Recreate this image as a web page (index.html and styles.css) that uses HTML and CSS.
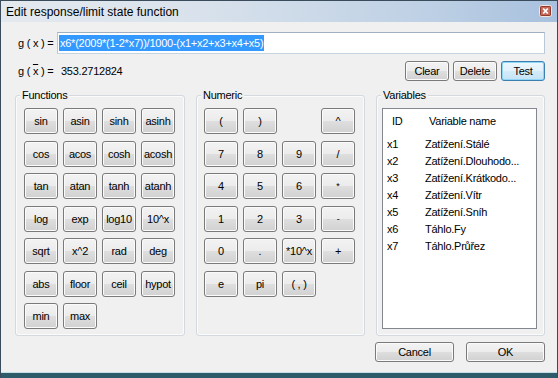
FILE: index.html
```html
<!DOCTYPE html>
<html lang="cs">
<head>
<meta charset="utf-8">
<title>Edit response/limit state function</title>
<link rel="stylesheet" href="styles.css">
</head>
<body>
<div class="window">
  <div class="titlebar">
    <span class="title">Edit response/limit state function</span>
    <svg class="close" width="13" height="12" viewBox="0 0 13 12" aria-label="Close">
      <rect x="0.5" y="0.5" width="12" height="11" rx="2" fill="#c9685a" stroke="#f4e4e0"/>
      <rect x="1.5" y="1.5" width="10" height="9" rx="1" fill="none" stroke="#8e3a2e"/>
      <path d="M4.2 3.5 L8.8 8.5 M8.8 3.5 L4.2 8.5" stroke="#fff" stroke-width="1.8"/>
    </svg>
  </div>
  <div class="content">
    <div class="row expr-row">
      <span class="glabel">g ( x ) =</span>
      <div class="textbox"><span class="sel">x6*(2009*(1-2*x7))/1000-(x1+x2+x3+x4+x5)</span></div>
    </div>
    <div class="row result-row">
      <span class="glabel">g ( <span class="bar">x</span> ) =</span>
      <span class="value">353.2712824</span>
      <div class="actions">
        <button class="btn">Clear</button>
        <button class="btn">Delete</button>
        <button class="btn default">Test</button>
      </div>
    </div>
    <div class="groups">
      <section class="group functions">
        <span class="group-title">Functions</span>
        <div class="keys">
          <button class="btn">sin</button><button class="btn">asin</button><button class="btn">sinh</button><button class="btn">asinh</button>
          <button class="btn">cos</button><button class="btn">acos</button><button class="btn">cosh</button><button class="btn">acosh</button>
          <button class="btn">tan</button><button class="btn">atan</button><button class="btn">tanh</button><button class="btn">atanh</button>
          <button class="btn">log</button><button class="btn">exp</button><button class="btn">log10</button><button class="btn">10^x</button>
          <button class="btn">sqrt</button><button class="btn">x^2</button><button class="btn">rad</button><button class="btn">deg</button>
          <button class="btn">abs</button><button class="btn">floor</button><button class="btn">ceil</button><button class="btn">hypot</button>
          <button class="btn">min</button><button class="btn">max</button>
        </div>
      </section>
      <section class="group numeric">
        <span class="group-title">Numeric</span>
        <div class="keys">
          <button class="btn">(</button><button class="btn">)</button><span class="empty"></span><button class="btn">^</button>
          <button class="btn">7</button><button class="btn">8</button><button class="btn">9</button><button class="btn">/</button>
          <button class="btn">4</button><button class="btn">5</button><button class="btn">6</button><button class="btn sym">*</button>
          <button class="btn">1</button><button class="btn">2</button><button class="btn">3</button><button class="btn sym">-</button>
          <button class="btn">0</button><button class="btn">.</button><button class="btn">*10^x</button><button class="btn">+</button>
          <button class="btn">e</button><button class="btn">pi</button><button class="btn">( , )</button>
        </div>
      </section>
      <section class="group variables">
        <span class="group-title">Variables</span>
        <div class="listbox">
          <div class="list-head"><span class="col-id">ID</span><span class="col-name">Variable name</span></div>
          <ul class="list">
            <li><span class="col-id">x1</span><span class="col-name">Zatížení.Stálé</span></li>
            <li><span class="col-id">x2</span><span class="col-name">Zatížení.Dlouhodo...</span></li>
            <li><span class="col-id">x3</span><span class="col-name">Zatížení.Krátkodo...</span></li>
            <li><span class="col-id">x4</span><span class="col-name">Zatížení.Vítr</span></li>
            <li><span class="col-id">x5</span><span class="col-name">Zatížení.Sníh</span></li>
            <li><span class="col-id">x6</span><span class="col-name">Táhlo.Fy</span></li>
            <li><span class="col-id">x7</span><span class="col-name">Táhlo.Průřez</span></li>
          </ul>
        </div>
      </section>
    </div>
    <div class="footer">
      <button class="btn wide">Cancel</button>
      <button class="btn wide">OK</button>
    </div>
  </div>
  <div class="frame-bottom"></div>
</div>
</body>
</html>
```

FILE: styles.css
```css
* { box-sizing: border-box; }

html, body {
  margin: 0;
  padding: 0;
  background: #f0f0f0;
}

body {
  font-family: "Liberation Sans", Arial, sans-serif;
  font-size: 11px;
  letter-spacing: -0.25px;
  color: #000;
}

.window {
  width: 558px;
  height: 378px;
  border: 1px solid #3a4c5c;
  border-bottom: none;
  display: flex;
  flex-direction: column;
  background: #f0f0f0;
}

.titlebar {
  height: 21px;
  flex: none;
  display: flex;
  align-items: center;
  justify-content: space-between;
  padding: 1px 5px 0 5px;
  background: linear-gradient(to right, #e4e9ef 0%, #d9e2ec 35%, #bfd1e5 75%, #a8c1de 100%);
}

.title {
  font-size: 12px;
  letter-spacing: 0;
  color: #000;
}

.close {
  display: block;
  margin-top: -2px;
}

.content {
  flex: 1;
  display: flex;
  flex-direction: column;
  padding: 10px 12px 10px 14px;
}

.row {
  display: flex;
  align-items: center;
}

.expr-row {
  height: 22px;
}

.glabel {
  width: 42px;
  flex: none;
  padding-left: 3px;
  white-space: nowrap;
}

.bar {
  text-decoration: overline;
}

.textbox {
  flex: 1;
  height: 22px;
  display: flex;
  align-items: center;
  padding-left: 1px;
  background: #fff;
  border: 1px solid;
  border-color: #9fb0c2 #b9c7d6 #c6d3e0 #b9c7d6;
}

.sel {
  background: #3399ff;
  color: #fff;
  height: 16px;
  line-height: 16px;
  padding: 0 1px 0 1px;
}

.result-row {
  height: 20px;
  margin-top: 7px;
}

.value {
  margin-left: 4px;
}

.actions {
  margin-left: auto;
  display: flex;
  gap: 4px;
}

.actions .btn {
  width: 44px;
  height: 20px;
}

.btn {
  font: inherit;
  letter-spacing: inherit;
  color: #000;
  padding: 0;
  margin: 0;
  border: 1px solid #7a7a7a;
  border-radius: 3px;
  background: linear-gradient(to bottom, #f3f3f3 0%, #ececec 48%, #dedede 52%, #d1d1d1 100%);
  box-shadow: inset 0 0 0 1px #fbfbfb;
  text-align: center;
  white-space: nowrap;
  overflow: hidden;
}

.btn.default {
  border-color: #3c7fb1;
  background: linear-gradient(to bottom, #eef7fd 0%, #e2f1fb 48%, #d3ebf9 52%, #c4e3f6 100%);
  box-shadow: inset 0 0 0 1px #8fd6f7;
}

.groups {
  display: flex;
  gap: 11px;
  margin-top: 14px;
  height: 241px;
  flex: none;
}

.group {
  position: relative;
  border: 1px solid #d3d9de;
  border-radius: 3px;
  box-shadow: inset 0 0 0 1px #fbfbfb;
}

.group-title {
  position: absolute;
  top: -7px;
  left: 4px;
  padding: 0 2px;
  line-height: 13px;
  background: #f0f0f0;
}

.functions { width: 170px; }
.numeric { width: 169px; }
.variables { flex: 1; }

.keys {
  display: grid;
  grid-template-columns: repeat(4, 34px);
  grid-auto-rows: 26px;
  column-gap: 5px;
  row-gap: 6.5px;
  padding-top: 12px;
}

.functions .keys { padding-left: 8px; }
.numeric .keys { padding-left: 7px; }

.btn.sym { font-size: 9px; }

.listbox {
  margin: 12px 0 0 5px;
  width: 155px;
  height: 221px;
  background: #fff;
  border: 1px solid #828790;
}

.list-head {
  display: flex;
  align-items: center;
  height: 23px;
  padding-left: 9px;
}

.list-head .col-id { width: 37px; }

.list {
  list-style: none;
  margin: 3px 0 0 0;
  padding: 0;
}

.list li {
  display: flex;
  align-items: center;
  height: 17px;
  padding-left: 4px;
  white-space: nowrap;
}

.list .col-id { width: 38px; flex: none; }

.footer {
  display: flex;
  justify-content: flex-end;
  gap: 12px;
  margin-top: 6px;
}

.btn.wide {
  width: 79px;
  height: 20px;
}

.frame-bottom {
  height: 6px;
  flex: none;
  border-top: 1px solid #c4dfe6;
  background: #2e5b69;
}
```
